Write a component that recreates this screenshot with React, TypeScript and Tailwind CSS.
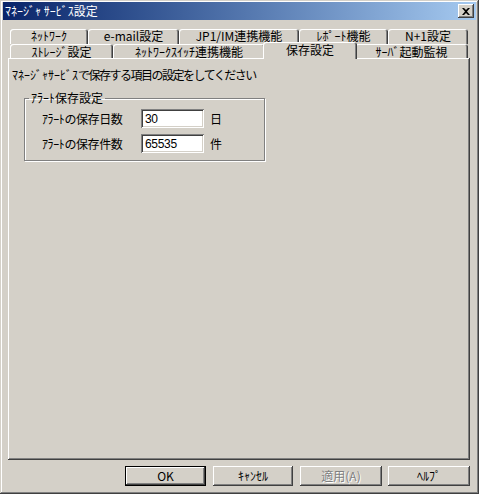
import React from "react";

const raised =
  "shadow-[inset_-1px_-1px_0_#404040,inset_1px_1px_0_#ffffff,inset_-2px_-2px_0_#808080,inset_2px_2px_0_#d4d0c8]";

function Tab({ label, w, up }: { label: string; w: string; up?: boolean }) {
  return (
    <div
      className={`${w} h-full flex items-center justify-center rounded-t-[3px] shadow-[inset_1px_1px_0_#ffffff,inset_-1px_0_0_#404040,inset_-2px_0_0_#808080] text-black`}
    >
      <span className={up ? "-mt-[1px]" : "pt-[1px]"}>{label}</span>
    </div>
  );
}

function Field({ label, value, unit }: { label: string; value: string; unit: string }) {
  return (
    <div className="flex items-center h-[19px]">
      <div className="w-[99px] tracking-[-0.4px]">{label}</div>
      <div className="w-[63px] h-[19px] bg-white flex items-center pl-[4px] text-[12px] shadow-[inset_1px_1px_0_#808080,inset_-1px_-1px_0_#ffffff,inset_2px_2px_0_#404040,inset_-2px_-2px_0_#d4d0c8] font-['Liberation_Sans',sans-serif] tracking-[-0.3px]">
        {value}
      </div>
      <div className="ml-[6px]">{unit}</div>
    </div>
  );
}

function Btn({ label, w, def, disabled, ml }: { label: string; w: string; def?: boolean; disabled?: boolean; ml: string }) {
  return (
    <div
      className={`${w} ${ml} h-[20px] flex items-center justify-center ${
        def
          ? "shadow-[inset_0_0_0_1px_#000000,inset_-2px_-2px_0_#404040,inset_2px_2px_0_#ffffff,inset_-3px_-3px_0_#808080]"
          : raised
      } ${disabled ? "text-[#808080] [text-shadow:1px_1px_0_#ffffff]" : "text-black"}`}
    >
      {label}
    </div>
  );
}

export default function App() {
  return (
    <div className="w-[479px] h-[494px] bg-[#d4d0c8] shadow-[inset_-1px_-1px_0_#404040,inset_1px_1px_0_#d4d0c8,inset_-2px_-2px_0_#808080,inset_2px_2px_0_#ffffff] p-[2px] flex flex-col font-['Noto_Sans_CJK_JP',sans-serif] text-[12px] leading-none text-black select-none">
      {/* Title bar */}
      <div className="h-[18px] mx-[1px] bg-linear-to-r from-[#0a246a] to-[#a6caf0] flex items-center justify-between pl-[2px] pr-[2px]">
        <span className="text-white text-[12px]">ﾏﾈｰｼﾞｬ ｻｰﾋﾞｽ設定</span>
        <div className={`w-[16px] h-[14px] bg-[#d4d0c8] ${raised} flex items-center justify-center`}>
          <svg width="8" height="7" viewBox="0 0 8 7">
            <path d="M0 0h2l2 2 2-2h2L5 3.5 8 7H6L4 5 2 7H0l3-3.5z" fill="#000" />
          </svg>
        </div>
      </div>

      {/* Tabs */}
      <div className="ml-[8px] mt-[9px] flex flex-col">
        <div className="flex h-[15px]">
          <Tab label="ﾈｯﾄﾜｰｸ" w="w-[78px]" up />
          <Tab label="e-mail設定" w="w-[91px]" up />
          <Tab label="JP1/IM連携機能" w="w-[120px]" up />
          <Tab label="ﾚﾎﾟｰﾄ機能" w="w-[89px]" up />
          <Tab label="N+1設定" w="w-[80px]" up />
        </div>
        <div className="flex h-[14px] items-end">
          <Tab label="ｽﾄﾚｰｼﾞ設定" w="w-[103px]" />
          <Tab label="ﾈｯﾄﾜｰｸｽｲｯﾁ連携機能" w="w-[152px]" />
          <div className="relative z-10 -mx-[2px] w-[94px] h-[17px] -mb-[1px] flex items-center justify-center rounded-t-[3px] bg-[#d4d0c8] shadow-[inset_1px_1px_0_#ffffff,inset_-1px_0_0_#404040,inset_-2px_0_0_#808080]">
            <span className="-mt-[2px]">保存設定</span>
          </div>
          <Tab label="ｻｰﾊﾞ起動監視" w="w-[113px]" />
        </div>
      </div>

      {/* Panel */}
      <div className={`ml-[6px] w-[462px] h-[402px] ${raised} px-[4px] pt-[11px] flex flex-col`}>
        <div>
          ﾏﾈｰｼﾞｬｻｰﾋﾞｽ<span className="tracking-[-1.5px]">で保存する項目の設定をしてください</span>
        </div>
        <fieldset className="ml-[12px] mt-[11px] w-[241px] h-[69px] border border-[#808080] shadow-[1px_1px_0_#ffffff,inset_1px_1px_0_#ffffff] p-0">
          <legend className="ml-[4px] px-[2px]">ｱﾗｰﾄ保存設定</legend>
          <div className="px-[17px] pt-[5px] flex flex-col gap-[6px]">
            <Field label="ｱﾗｰﾄの保存日数" value="30" unit="日" />
            <Field label="ｱﾗｰﾄの保存件数" value="65535" unit="件" />
          </div>
        </fieldset>
      </div>

      {/* Buttons */}
      <div className="flex mt-[6px]">
        <Btn label="OK" w="w-[81px]" def ml="ml-[123px]" />
        <Btn label="ｷｬﾝｾﾙ" w="w-[80px]" ml="ml-[7px]" />
        <Btn label="適用(A)" w="w-[82px]" disabled ml="ml-[7px]" />
        <Btn label="ﾍﾙﾌﾟ" w="w-[82px]" ml="ml-[6px]" />
      </div>
    </div>
  );
}
